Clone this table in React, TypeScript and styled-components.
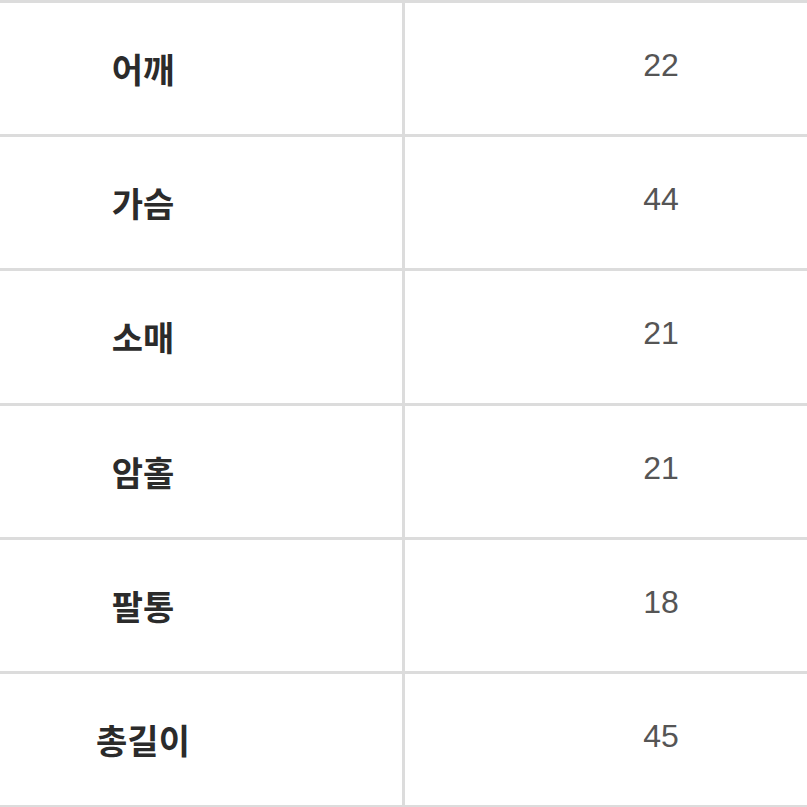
import React from "react";
import styled, { createGlobalStyle } from "styled-components";

const Global = createGlobalStyle`
  html, body { margin: 0; padding: 0; background: #fff; }
  body { font-family: "Noto Sans CJK KR", "Liberation Sans", sans-serif; }
`;

const Table = styled.div`
  width: 807px;
  height: 807px;
  display: grid;
  grid-template-columns: 402px 402px;
  grid-auto-rows: 1fr;
  column-gap: 3px;
  row-gap: 3px;
  padding: 3px 0 2px;
  box-sizing: border-box;
  background: #dcdcdc;
`;

const LabelCell = styled.div`
  background: #fff;
  display: flex;
  align-items: center;
  justify-content: center;
  padding-right: 116px;
  font-family: "Noto Sans CJK KR", sans-serif;
  font-weight: 700;
  font-size: 34px;
  color: #2b2b2b;
`;

const ValueCell = styled.div`
  background: #fff;
  display: flex;
  align-items: center;
  justify-content: center;
  padding-left: 110px;
  padding-bottom: 6px;
  font-family: "Liberation Sans", "Noto Sans CJK KR", sans-serif;
  font-size: 32px;
  color: #555;
`;

const rows: [string, string][] = [
  ["어깨", "22"],
  ["가슴", "44"],
  ["소매", "21"],
  ["암홀", "21"],
  ["팔통", "18"],
  ["총길이", "45"],
];

export default function App() {
  return (
    <>
      <Global />
      <Table>
        {rows.map(([k, v]) => (
          <React.Fragment key={k}>
            <LabelCell>{k}</LabelCell>
            <ValueCell>{v}</ValueCell>
          </React.Fragment>
        ))}
      </Table>
    </>
  );
}
